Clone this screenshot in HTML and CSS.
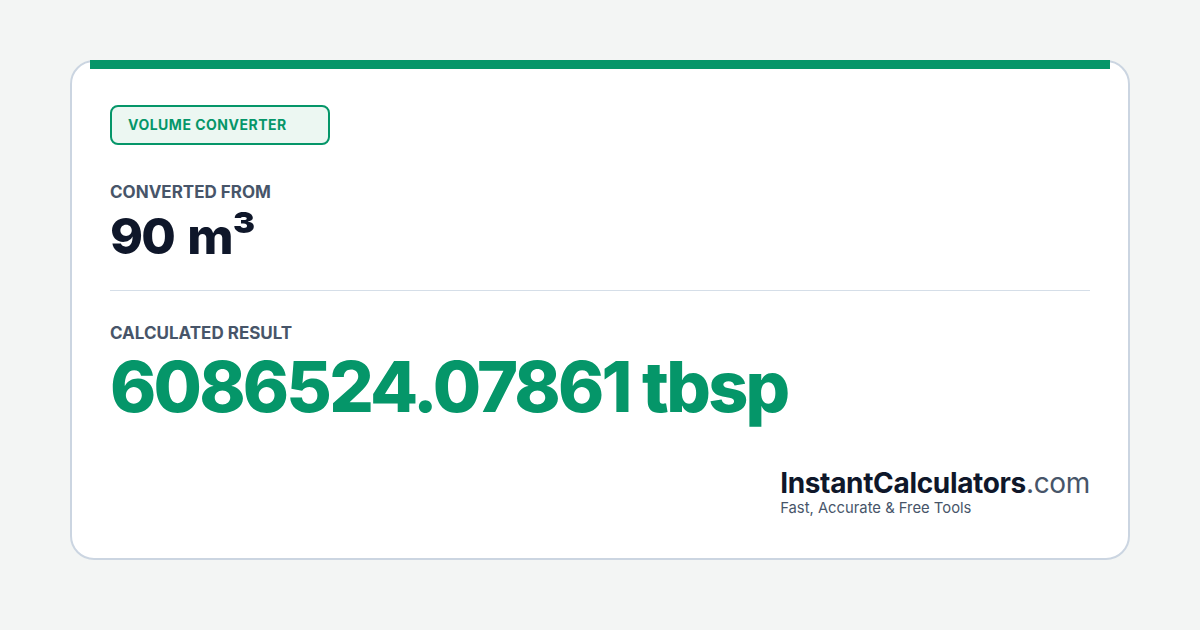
FILE: index.html
```html
<!DOCTYPE html>
<html lang="en">
<head>
    <meta charset="UTF-8">
    <meta name="viewport" content="width=device-width, initial-scale=1.0">
    <title>Volume Converter - 90 m³ to tbsp</title>
    <link rel="stylesheet" href="styles.css">
</head>
<body>

    <div class="card">
        <div class="accent-bar"></div>

        <div class="badge">VOLUME CONVERTER</div>

        <div class="label from-label">CONVERTED FROM</div>
        <div class="from-value">90 m³</div>

        <div class="divider"></div>

        <div class="label">CALCULATED RESULT</div>
        <div class="result-value">6086524.07861 tbsp</div>

        <div class="brand">
            <div class="brand-name"><b>InstantCalculators</b>.com</div>
            <div class="brand-tag">Fast, Accurate &amp; Free Tools</div>
        </div>
    </div>

</body>
</html>
```

FILE: styles.css
```css
body { font-family: Inter, 'Noto Sans', sans-serif; margin: 0; padding: 60px 70px; background-color: #f3f5f4; }
.card { position: relative; background: white; height: 500px; box-sizing: border-box; border: 2px solid #cbd5e1; border-radius: 24px; padding: 43px 38px 0 38px; display: flex; flex-direction: column; }
.accent-bar { position: absolute; top: -2px; left: 18px; right: 18px; height: 9px; background: #059669; }
.badge { width: 220px; height: 40px; box-sizing: border-box; border: 2px solid #059669; border-radius: 8px; background: #ecf7f2; color: #059669; font-size: 14px; font-weight: 700; letter-spacing: 0.5px; padding-left: 16px; line-height: 36px; }
.label { color: #475569; font-size: 17px; font-weight: 700; line-height: 20px; }
.from-label { margin-top: 37px; }
.from-value { color: #0f172a; font-size: 50px; font-weight: 800; line-height: 60px; margin-top: 4px; letter-spacing: -0.035em; word-spacing: 4px; }
.divider { height: 1px; background: #d5dee8; margin: 24px 0 32px 0; }
.result-value { color: #059669; font-size: 70px; font-weight: 800; line-height: 80px; letter-spacing: -0.04em; margin-top: 4px; }
.brand { margin-top: auto; margin-bottom: 41px; align-self: flex-end; }
.brand-name { color: #475569; font-size: 28px; line-height: 30px; letter-spacing: -0.012em; }
.brand-name b { color: #0f172a; font-weight: 700; }
.brand-tag { color: #475569; font-size: 14.8px; line-height: 18px; margin-top: 1px; }
```
